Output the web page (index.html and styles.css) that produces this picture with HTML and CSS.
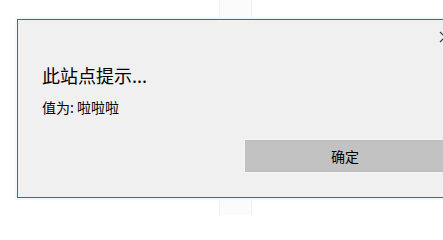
FILE: index.html
```html
<!DOCTYPE html>
<html lang="zh-CN">
<head>
<meta charset="utf-8">
<title>此站点提示</title>
<link rel="stylesheet" href="styles.css">
</head>
<body>
<div class="page">
  <div class="stripe"></div>
</div>
<div class="dialog">
  <div class="close">
    <svg width="12" height="12" viewBox="0 0 12 12"><path d="M1 1 L11 11 M11 1 L1 11" stroke="#333" stroke-width="1.1" fill="none"/></svg>
  </div>
  <div class="title">此站点提示...</div>
  <div class="message">值为: 啦啦啦</div>
  <div class="actions">
    <button class="ok">确定</button>
  </div>
</div>
</body>
</html>
```
FILE: styles.css
```css
html, body {
  margin: 0;
  padding: 0;
  background: #ffffff;
  width: 443px;
  height: 215px;
  overflow: hidden;
  font-family: "Noto Sans CJK SC", "Noto Sans", sans-serif;
}
.page {
  height: 215px;
  display: flex;
  padding-left: 219px;
  box-sizing: border-box;
}
.stripe {
  width: 31px;
  height: 215px;
  background: #fbfbfb;
  border-left: 1px solid #f0f0f0;
  border-right: 1px solid #f0f0f0;
}
.dialog {
  position: absolute;
  left: 17px;
  top: 19px;
  width: 426px;
  height: 179px;
  box-sizing: border-box;
  overflow: hidden;
  background: #f0f0f0;
  border: 1px solid #3a6b94;
  border-right: none;
  box-shadow: 0 0 0 2px #ecfbff;
  padding: 43px 0 0 24px;
  display: flex;
  flex-direction: column;
}
.close {
  position: absolute;
  left: 421px;
  top: 11px;
  width: 12px;
  height: 12px;
  line-height: 0;
}
.title {
  font-size: 18px;
  line-height: 24px;
  color: #000;
}
.message {
  margin-top: 10px;
  font-size: 14px;
  line-height: 20px;
  color: #000;
}
.actions {
  margin-top: 23px;
  padding-left: 203px;
  display: flex;
}
.ok {
  flex: none;
  width: 200px;
  height: 32px;
  background: #c2c2c2;
  border: 1px solid #bcbcbc;
  outline: 1px solid #f7f7f7;
  font-family: "Noto Sans CJK SC", "Noto Sans", sans-serif;
  font-size: 14px;
  color: #000;
  padding: 0;
}
```
